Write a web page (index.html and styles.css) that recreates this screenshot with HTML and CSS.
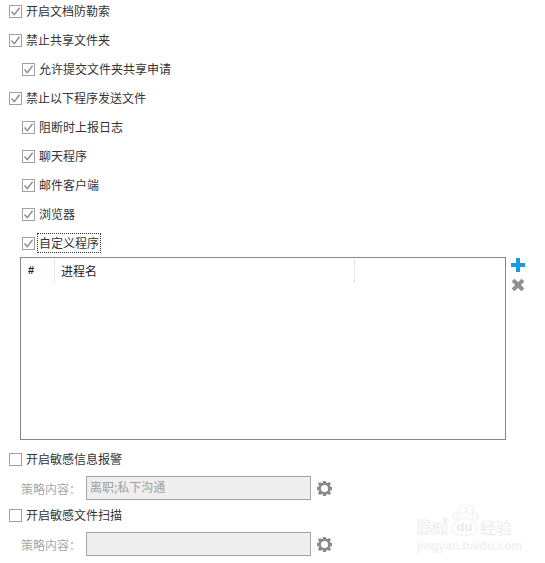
FILE: index.html
```html
<!DOCTYPE html>
<html lang="zh">
<head>
<meta charset="utf-8">
<title>设置</title>
<link rel="stylesheet" href="styles.css">
</head>
<body>
<div class="page">
  <div class="rows">
    <label class="row"><span class="box on"><svg viewBox="0 0 11 11"><path d="M1.5 5.500 4.300 8.600 9.600 1.800"/></svg></span><span>开启文档防勒索</span></label>
    <label class="row"><span class="box on"><svg viewBox="0 0 11 11"><path d="M1.5 5.500 4.300 8.600 9.600 1.800"/></svg></span><span>禁止共享文件夹</span></label>
    <label class="row sub"><span class="box on"><svg viewBox="0 0 11 11"><path d="M1.5 5.500 4.300 8.600 9.600 1.800"/></svg></span><span>允许提交文件夹共享申请</span></label>
    <label class="row"><span class="box on"><svg viewBox="0 0 11 11"><path d="M1.5 5.500 4.300 8.600 9.600 1.800"/></svg></span><span>禁止以下程序发送文件</span></label>
    <label class="row sub"><span class="box on"><svg viewBox="0 0 11 11"><path d="M1.5 5.500 4.300 8.600 9.600 1.800"/></svg></span><span>阻断时上报日志</span></label>
    <label class="row sub"><span class="box on"><svg viewBox="0 0 11 11"><path d="M1.5 5.500 4.300 8.600 9.600 1.800"/></svg></span><span>聊天程序</span></label>
    <label class="row sub"><span class="box on"><svg viewBox="0 0 11 11"><path d="M1.5 5.500 4.300 8.600 9.600 1.800"/></svg></span><span>邮件客户端</span></label>
    <label class="row sub"><span class="box on"><svg viewBox="0 0 11 11"><path d="M1.5 5.500 4.300 8.600 9.600 1.800"/></svg></span><span>浏览器</span></label>
    <label class="row sub"><span class="box on"><svg viewBox="0 0 11 11"><path d="M1.5 5.500 4.300 8.600 9.600 1.800"/></svg></span><span class="focus">自定义程序</span></label>
  </div>

  <div class="table-wrap">
    <div class="table">
      <div class="thead">
        <div class="th th-num">#</div>
        <div class="th th-name">进程名</div>
      </div>
    </div>
    <div class="tools">
      <svg class="tool" viewBox="0 0 14 14"><path class="plus" d="M5 0h4v5h5v4H9v5H5V9H0V5h5z"/></svg>
      <svg class="tool" viewBox="0 0 14 14"><path class="cross" d="M3.500 3.500 10.500 10.500M10.500 3.500 3.500 10.500"/></svg>
    </div>
  </div>

  <div class="group">
    <label class="row"><span class="box"></span><span>开启敏感信息报警</span></label>
    <div class="policy">
      <span class="policy-label">策略内容：</span>
      <div class="field">离职;私下沟通</div>
      <svg class="gear" viewBox="0 0 16 16"><path d="M6.600 0h2.800l.4 2.200 1.300.55L13 1.500l2 2-1.250 1.900.55 1.300 2.200.4v2.800l-2.200.4-.55 1.300L15 13.500l-2 2-1.900-1.250-1.300.55-.4 2.200H6.600l-.4-2.200-1.300-.55L3 15.500l-2-2 1.250-1.900-.55-1.300L-.5 9.900V7.100l2.200-.4.55-1.300L1 3.500l2-2 1.900 1.250 1.300-.55zM8 4.700a3.800 3.800 0 1 0 0 7.600 3.800 3.800 0 0 0 0-7.600z" transform="translate(0 -.5)" fill-rule="evenodd"/></svg>
    </div>
    <label class="row"><span class="box"></span><span>开启敏感文件扫描</span></label>
    <div class="policy">
      <span class="policy-label">策略内容：</span>
      <div class="field"></div>
      <svg class="gear" viewBox="0 0 16 16"><path d="M6.600 0h2.800l.4 2.200 1.300.55L13 1.500l2 2-1.250 1.900.55 1.300 2.200.4v2.800l-2.200.4-.55 1.300L15 13.500l-2 2-1.900-1.250-1.300.55-.4 2.200H6.600l-.4-2.200-1.300-.55L3 15.500l-2-2 1.250-1.900-.55-1.300L-.5 9.900V7.100l2.200-.4.55-1.300L1 3.500l2-2 1.900 1.250 1.300-.55zM8 4.700a3.800 3.800 0 1 0 0 7.600 3.800 3.800 0 0 0 0-7.600z" transform="translate(0 -.5)" fill-rule="evenodd"/></svg>
    </div>
  </div>

  <div class="watermark">
    <div class="wm-top"><span class="wm-bai">Bai</span><span class="wm-mark"><svg class="wm-paw" viewBox="0 0 30 32"><ellipse cx="6" cy="11" rx="3" ry="4"/><ellipse cx="13" cy="5" rx="3.500" ry="4.500"/><ellipse cx="21" cy="5" rx="3.500" ry="4.500"/><ellipse cx="26" cy="12" rx="3" ry="4"/><path d="M15 14c6 0 13 5 13 11 0 5-6 6-13 6S2 30 2 25c0-6 7-11 13-11z"/></svg><span class="wm-du">du</span></span><span class="wm-cn">经验</span></div>
    <div class="wm-url">jingyan.baidu.com</div>
  </div>
</div>
</body>
</html>
```
FILE: styles.css
```css
* { box-sizing: border-box; }
html, body { margin: 0; padding: 0; background: #fff; }
body {
  width: 545px;
  height: 563px;
  overflow: hidden;
  font-family: "Noto Sans CJK SC", "Liberation Sans", sans-serif;
  font-size: 12px;
  color: #333;
}
.page { position: relative; width: 545px; height: 563px; }
.rows { display: flex; flex-direction: column; gap: 7px; }
.row {
  display: flex;
  align-items: center;
  height: 22px;
  padding-left: 9px;
  gap: 4px;
  line-height: 16px;
}
.row.sub { padding-left: 22px; }
.box {
  flex: none;
  width: 13px;
  height: 13px;
  border: 1px solid #a0a0a0;
  background: #fff;
  display: flex;
  align-items: center;
  justify-content: center;
}
.box svg { width: 11px; height: 11px; fill: none; stroke: #8a8a8a; stroke-width: 1.4; }
.focus { outline: 1px dotted #333; outline-offset: 0; padding: 1px 1px; margin-left: -1px; }
.table-wrap { display: flex; margin: 3px 0 0 20px; gap: 5px; align-items: flex-start; }
.table {
  width: 486px;
  height: 183px;
  border: 1px solid #85858d;
  background: #fff;
}
.thead { display: flex; height: 24px; margin-top: 1px; align-items: stretch; color: #222; }
.th { display: flex; align-items: center; border-right: 1px solid #e6e6e6; height: 24px; padding-bottom: 2px; }
.th-num { width: 34px; padding-left: 7px; font-family: "Liberation Sans", sans-serif; font-size: 11px; font-weight: 700; }
.th-name { width: 300px; padding-left: 6px; }
.tools { display: flex; flex-direction: column; gap: 6px; padding-top: 1px; }
.tool { display: block; width: 14px; height: 14px; }
.plus { fill: #1a9ae0; }
.cross { fill: none; stroke: #8f8f8f; stroke-width: 4; stroke-linecap: square; }
.group { display: flex; flex-direction: column; margin-top: 7px; }
.group .row { height: 24px; gap: 4px; }
.policy {
  display: flex;
  align-items: center;
  height: 24px;
  margin: 5px 0 3px;
  padding-left: 21px;
}
.policy-label { width: 65px; color: #a8a8a8; }
.field {
  width: 225px;
  height: 24px;
  border: 1px solid #a6a6a6;
  background: #eeeeee;
  color: #a0a0a0;
  padding-left: 3px;
  line-height: 20px;
}
.gear { width: 15px; height: 15px; margin-left: 6px; fill: #8a8a8a; }
.watermark {
  position: absolute;
  left: 417px;
  top: 505px;
  width: 100px;
}
.wm-top { display: flex; align-items: flex-end; height: 31px; }
.wm-bai {
  width: 33px;
  font: 700 20px/18px "Liberation Sans", sans-serif;
  color: #fff;
  -webkit-text-stroke: 1px #ececec;
}
.wm-mark { position: relative; display: block; flex: none; width: 29px; height: 31px; }
.wm-paw { display: block; width: 29px; height: 31px; fill: #fff; stroke: #ececec; stroke-width: 1; }
.wm-du {
  position: absolute;
  left: 0;
  right: 0;
  bottom: 2px;
  text-align: center;
  font: 700 13px/14px "Liberation Sans", sans-serif;
  color: #ebebeb;
}
.wm-cn { font-size: 16px; line-height: 18px; color: #ececec; margin-left: 1px; }
.wm-url { font: 700 12px/12px "Liberation Sans", sans-serif; white-space: nowrap; margin-top: 4px; color: #f2f2f2; }
```
